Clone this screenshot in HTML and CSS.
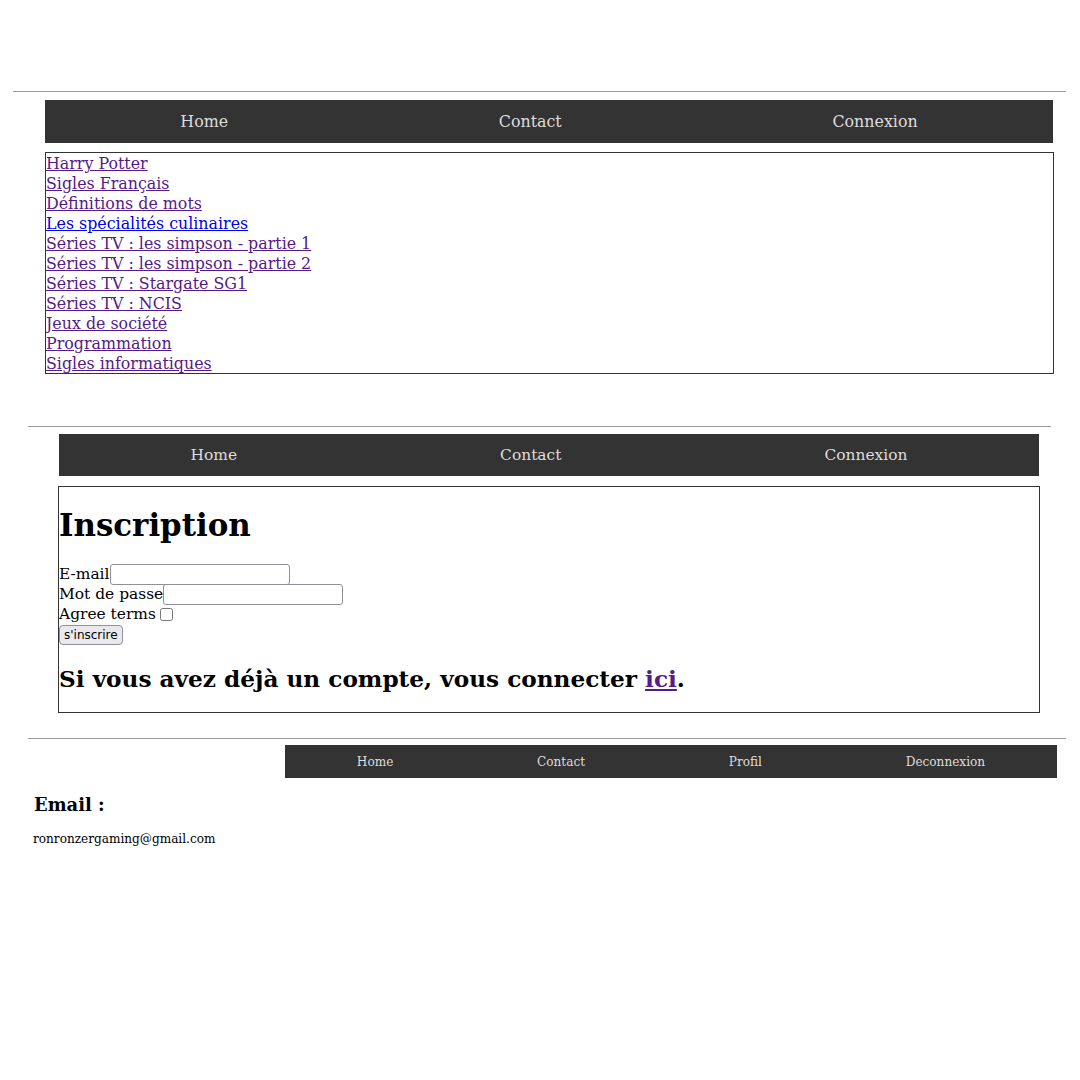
FILE: index.html
```html
<!DOCTYPE html>
<html lang="fr">
<head>
<meta charset="utf-8">
<title>Quiz</title>
<link rel="stylesheet" href="styles.css">
</head>
<body>
<section class="shot shot-one">
  <hr class="rule">
  <nav class="menu menu-one">
    <a href="#">Home</a>
    <a href="#">Contact</a>
    <a href="#">Connexion</a>
  </nav>
  <div class="box list-box">
    <a class="visited" href="#">Harry Potter</a>
    <a class="visited" href="#">Sigles Français</a>
    <a class="visited" href="#">Définitions de mots</a>
    <a class="fresh" href="#">Les spécialités culinaires</a>
    <a class="visited" href="#">Séries TV : les simpson - partie 1</a>
    <a class="visited" href="#">Séries TV : les simpson - partie 2</a>
    <a class="visited" href="#">Séries TV : Stargate SG1</a>
    <a class="visited" href="#">Séries TV : NCIS</a>
    <a class="visited" href="#">Jeux de société</a>
    <a class="visited" href="#">Programmation</a>
    <a class="visited" href="#">Sigles informatiques</a>
  </div>
</section>

<section class="shot shot-two">
  <hr class="rule">
  <nav class="menu menu-two">
    <a href="#">Home</a>
    <a href="#">Contact</a>
    <a href="#">Connexion</a>
  </nav>
  <div class="box form-box">
    <h1 class="title">Inscription</h1>
    <form class="form">
      <label class="row">E-mail<input class="field" type="text"></label>
      <label class="row">Mot de passe<input class="field" type="password"></label>
      <label class="row">Agree terms <input class="check" type="checkbox"></label>
      <button class="btn" type="button">s'inscrire</button>
    </form>
    <h2 class="sub">Si vous avez déjà un compte, vous connecter <a class="visited" href="#">ici</a>.</h2>
  </div>
</section>

<section class="shot shot-three">
  <hr class="rule">
  <nav class="menu menu-three">
    <a href="#">Home</a>
    <a href="#">Contact</a>
    <a href="#">Profil</a>
    <a href="#">Deconnexion</a>
  </nav>
  <h3 class="label">Email :</h3>
  <p class="value">ronronzergaming@gmail.com</p>
</section>
</body>
</html>
```

FILE: styles.css
```css
html, body {
  margin: 0;
  padding: 0;
  background: #fff;
}

body {
  font-family: "DejaVu Serif", serif;
  font-size: 16px;
  color: #000;
}

.shot {
  display: block;
}

.rule {
  margin: 0;
  height: 0;
  border: 0;
  border-top: 1px solid #9a9a9a;
}

.menu {
  display: flex;
  justify-content: space-around;
  align-items: center;
  background: #333;
  box-sizing: border-box;
}

.menu a {
  color: #ddd;
  text-decoration: none;
}

.box {
  box-sizing: border-box;
  border: 1px solid #333;
}

/* section 1 */
.shot-one {
  padding-top: 91px;
  margin-left: 13px;
  width: 1053px;
  font-size: 15.85px;
}

.menu-one {
  margin: 8px 0 0 32px;
  width: 1008px;
  height: 43px;
}

.list-box {
  margin: 9px 0 0 32px;
  width: 1009px;
  height: 222px;
  padding-top: 1px;
  overflow: hidden;
}

.list-box a {
  display: block;
  width: max-content;
  line-height: 20px;
}

.visited {
  color: #551a8b;
}

.fresh {
  color: #0000ee;
}

/* section 2 */
.shot-two {
  margin: 52px 0 0 28px;
  width: 1023px;
  font-size: 15.45px;
}

.menu-two {
  margin: 7px 0 0 31px;
  width: 980px;
  height: 42px;
}

.form-box {
  margin: 10px 0 0 30px;
  width: 982px;
  height: 227px;
}

.title {
  margin: 20px 0 20px 0;
  font-size: 30.9px;
  line-height: 37px;
  font-weight: bold;
}

.form {
  display: flex;
  flex-direction: column;
  align-items: flex-start;
}

.row {
  display: flex;
  align-items: center;
  height: 20px;
  line-height: 20px;
}

.field {
  box-sizing: border-box;
  width: 180px;
  height: 21px;
  margin: 0;
  padding: 1px 2px;
  border: 1px solid #8f8f9d;
  border-radius: 3px;
  font: 13px "DejaVu Sans", sans-serif;
}

.check {
  box-sizing: border-box;
  width: 13px;
  height: 13px;
  margin: 0 0 0 4px;
}

.btn {
  margin-top: 1px;
  height: 20px;
  padding: 0 4px;
  font: 12px "DejaVu Sans", sans-serif;
  border: 1px solid #8f8f9d;
  border-radius: 4px;
  background: #e9e9ed;
  color: #000;
}

.sub {
  margin: 20px 0 0 0;
  font-size: 23.2px;
  line-height: 28px;
  font-weight: bold;
}

/* section 3 */
.shot-three {
  margin: 25px 0 0 28px;
  width: 1038px;
}

.menu-three {
  margin: 6px 0 0 257px;
  width: 772px;
  height: 33px;
  font-size: 12.1px;
}

.label {
  margin: 16px 0 0 6px;
  font-size: 17.9px;
  line-height: 22px;
  font-weight: bold;
}

.value {
  margin: 16px 0 0 5px;
  font-size: 12.1px;
  line-height: 15px;
}
```
